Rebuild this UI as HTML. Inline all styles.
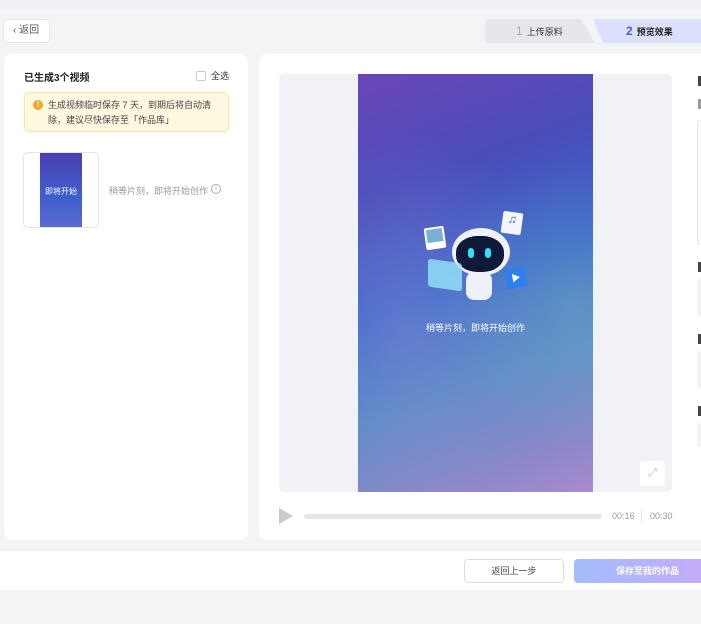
<!DOCTYPE html>
<html><head><meta charset="utf-8"><style>
*{margin:0;padding:0;box-sizing:border-box}
body{width:701px;height:624px;overflow:hidden;background:#f3f4f6;font-family:"Liberation Sans","Noto Sans CJK SC",sans-serif;position:relative;color:#222}
.a{position:absolute}
</style></head><body>
<div class="a" style="left:0;top:0;width:701px;height:9px;background:#eef0f3"></div>
<div class="a" style="left:3px;top:19px;width:47px;height:24px;background:#fff;border:1px solid #e3e5ea;border-radius:4px;font-size:10px;color:#555;line-height:22px;padding-left:9px">‹ 返回</div>
<div class="a" style="left:485px;top:19px;width:110px;height:24px;background:#e5e7ed;border-radius:4px 0 0 4px;clip-path:polygon(0 0,96px 0,110px 24px,0 24px);font-size:9px;color:#333;line-height:24px;padding-left:31px"><span style="color:#aaa;font-size:12px;margin-right:4px">1</span>上传原料</div>
<div class="a" style="left:593px;top:19px;width:108px;height:24px;background:#dde0fb;clip-path:polygon(0 0,108px 0,108px 24px,10px 24px);font-size:9px;font-weight:bold;color:#222;line-height:24px;padding-left:33px"><span style="color:#4a5bf0;font-size:12px;margin-right:4px">2</span>预览效果</div>

<div class="a" style="left:4px;top:54px;width:244px;height:486px;background:#fff;border-radius:8px"></div>
<div class="a" style="left:24px;top:69px;font-size:10px;font-weight:bold">已生成3个视频</div>
<div class="a" style="left:196px;top:71px;width:10px;height:10px;border:1px solid #ccc;border-radius:2px"></div>
<div class="a" style="left:211px;top:69px;font-size:9px;color:#333">全选</div>
<div class="a" style="left:24px;top:92px;width:205px;height:40px;background:#fff8e1;border:1px solid #fbe3a3;border-radius:5px"></div>
<div class="a" style="left:33px;top:100px;width:10px;height:10px;border-radius:50%;background:#f5a623;color:#fff;font-size:8px;text-align:center;line-height:10px;font-weight:bold">!</div>
<div class="a" style="left:48px;top:98px;width:178px;font-size:9px;line-height:15px;color:#444">生成视频临时保存 7 天，到期后将自动清除，建议尽快保存至「作品库」</div>
<div class="a" style="left:23px;top:152px;width:76px;height:76px;border:1px solid #e3e5ea;border-radius:5px;background:#fff"></div>
<div class="a" style="left:40px;top:153px;width:42px;height:74px;background:linear-gradient(180deg,#4a40b0,#3f5fcf 60%,#5a6ad0)"></div>
<div class="a" style="left:40px;top:186px;width:42px;text-align:center;font-size:8px;color:#fff">即将开始</div>
<div class="a" style="left:109px;top:184px;font-size:9px;color:#999">稍等片刻，即将开始创作</div>
<div class="a" style="left:211px;top:184px;width:10px;height:10px;border:1px solid #aaa;border-radius:50%;font-size:7px;color:#aaa;text-align:center;line-height:8px">i</div>

<div class="a" style="left:259px;top:54px;width:450px;height:486px;background:#fff;border-radius:8px"></div>
<div class="a" style="left:279px;top:74px;width:393px;height:418px;background:#f1f2f5;border-radius:5px"></div>
<div class="a" style="left:358px;top:74px;width:235px;height:418px;background:linear-gradient(160deg,#6b46b6 0%,#4a4cba 25%,#3868cc 50%,#5a8ac8 70%,#8a88c8 88%,#a88ad0 100%)"></div>
<div class="a" style="left:358px;top:74px;width:235px;height:418px;background:radial-gradient(ellipse at 20% 60%,rgba(160,150,210,.35),transparent 55%),radial-gradient(ellipse at 90% 55%,rgba(120,180,190,.4),transparent 45%)"></div>
<div class="a" style="left:425px;top:227px;width:20px;height:22px;background:#fff;transform:rotate(-8deg);border-radius:2px"><div style="margin:2px;height:13px;background:#7ab0d8"></div></div>
<div class="a" style="left:502px;top:212px;width:20px;height:22px;background:#f4f6ff;transform:rotate(8deg);border-radius:2px;color:#3a6ae0;font-size:12px;text-align:center">♫</div>
<div class="a" style="left:452px;top:228px;width:58px;height:48px;border-radius:50%;background:#eef1f8"></div>
<div class="a" style="left:456px;top:236px;width:48px;height:36px;border-radius:45%;background:#101a38"></div>
<div class="a" style="left:468px;top:248px;width:6px;height:10px;border-radius:3px;background:#2fe0ff"></div>
<div class="a" style="left:485px;top:248px;width:6px;height:10px;border-radius:3px;background:#2fe0ff"></div>
<div class="a" style="left:466px;top:272px;width:26px;height:28px;border-radius:8px;background:#eef1f8"></div>
<div class="a" style="left:428px;top:261px;width:34px;height:28px;background:rgba(150,230,250,.8);border-radius:3px;transform:skewY(8deg)"></div>
<div class="a" style="left:506px;top:268px;width:20px;height:20px;background:#2f7ef0;transform:rotate(-10deg);color:#fff;font-size:9px;text-align:center;line-height:20px">▶</div>
<div class="a" style="left:358px;top:321px;width:235px;text-align:center;font-size:9px;color:#fff">稍等片刻，即将开始创作</div>
<div class="a" style="left:640px;top:461px;width:25px;height:25px;background:#fff;border-radius:4px;color:#bbb;font-size:11px;text-align:center;line-height:25px">⤢</div>

<div class="a" style="left:279px;top:508px;width:0;height:0;border-left:14px solid #c8cacf;border-top:8px solid transparent;border-bottom:8px solid transparent"></div>
<div class="a" style="left:304px;top:514px;width:298px;height:5px;background:#e6e7ea;border-radius:3px"></div>
<div class="a" style="left:612px;top:511px;font-size:9px;color:#999">00:16</div>
<div class="a" style="left:641px;top:510px;width:1px;height:12px;background:#e3e3e3"></div>
<div class="a" style="left:650px;top:511px;font-size:9px;color:#999">00:30</div>

<div class="a" style="left:698px;top:76px;width:3px;height:10px;background:#444"></div>
<div class="a" style="left:698px;top:99px;width:3px;height:10px;background:#999"></div>
<div class="a" style="left:697px;top:120px;width:6px;height:125px;border:1px solid #e6e6e6;border-radius:4px;background:#fafafa"></div>
<div class="a" style="left:698px;top:262px;width:3px;height:10px;background:#444"></div>
<div class="a" style="left:697px;top:278px;width:6px;height:39px;border-radius:4px;background:#f3f3f5"></div>
<div class="a" style="left:698px;top:334px;width:3px;height:10px;background:#444"></div>
<div class="a" style="left:697px;top:351px;width:6px;height:38px;border-radius:4px;background:#f3f3f5"></div>
<div class="a" style="left:698px;top:406px;width:3px;height:10px;background:#444"></div>
<div class="a" style="left:697px;top:423px;width:6px;height:24px;border-radius:4px;background:#f3f3f5"></div>

<div class="a" style="left:0;top:550px;width:701px;height:40px;background:#fff;border-top:1px solid #eceef1"></div>
<div class="a" style="left:464px;top:559px;width:100px;height:24px;border:1px solid #dcdee2;border-radius:4px;background:#fff;font-size:9px;color:#444;text-align:center;line-height:22px">返回上一步</div>
<div class="a" style="left:574px;top:559px;width:140px;height:24px;border-radius:4px;background:linear-gradient(90deg,#a3bdfb,#c6aafa);font-size:9px;color:#fff;font-weight:bold;line-height:24px;padding-left:42px">保存至我的作品</div>
</body></html>
